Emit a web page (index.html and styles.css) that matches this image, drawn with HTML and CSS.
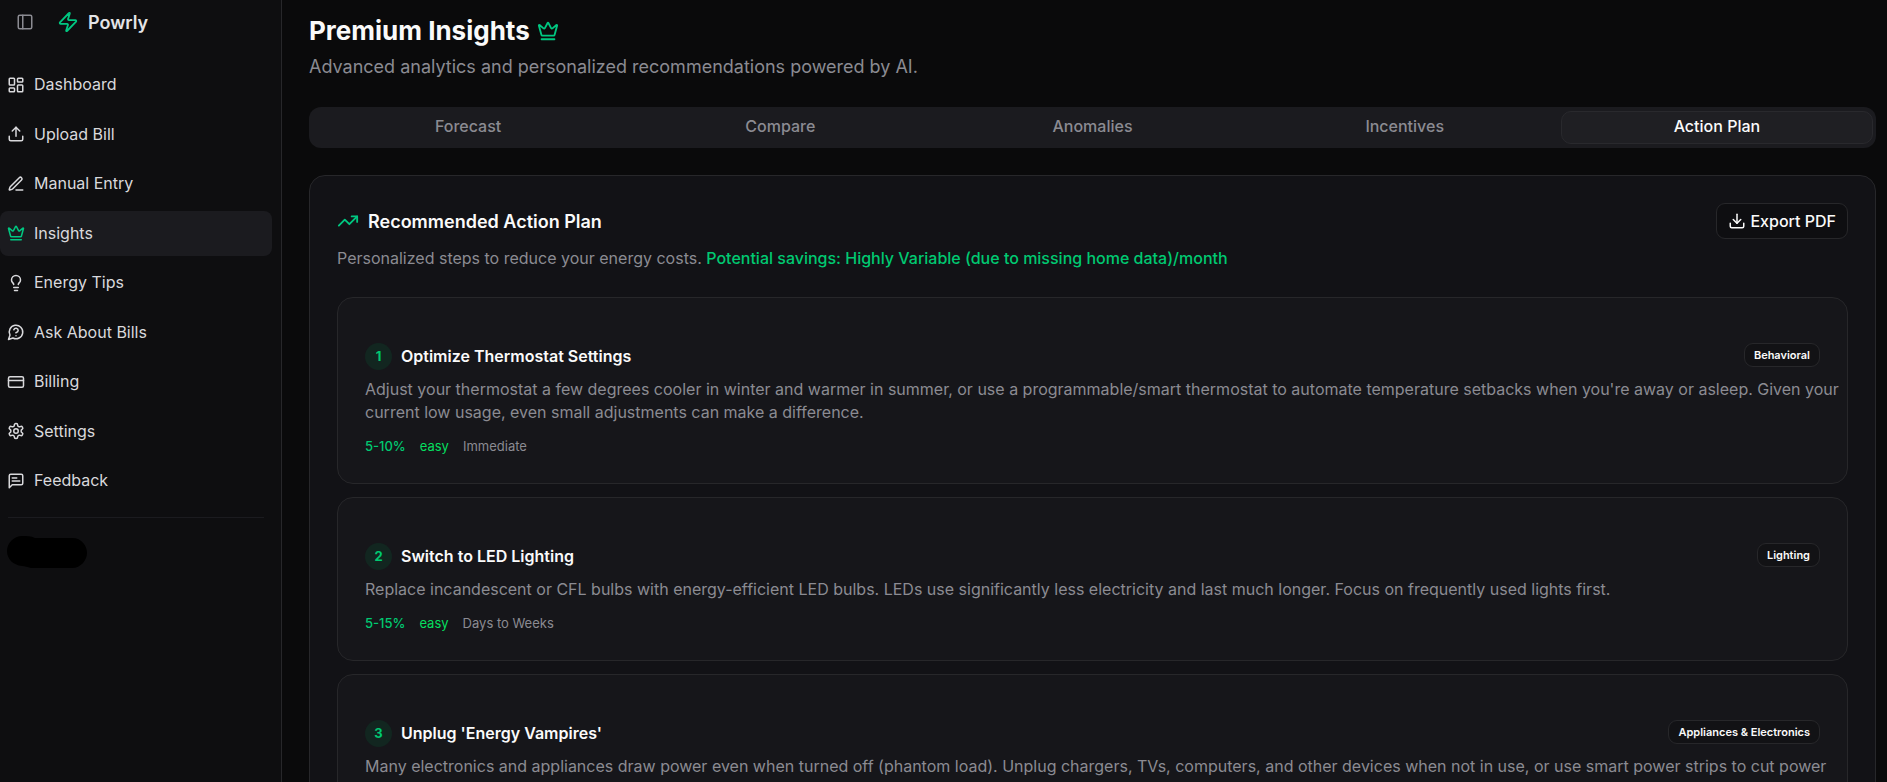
FILE: index.html
```html
<!DOCTYPE html>
<html lang="en">
    <head>
        <meta charset="utf-8">
        <title>Powrly - Premium Insights</title>
        <link rel="stylesheet" href="styles.css">
    </head>
    <body>
        <!-- icon set -->
        <svg class="sprite" aria-hidden="true">
            <symbol id="i-panel" viewBox="0 0 24 24"><rect x="3" y="3" width="18" height="18" rx="2"/><path d="M9 3v18"/></symbol>
            <symbol id="i-zap" viewBox="0 0 24 24"><path d="M4 14a1 1 0 0 1-.78-1.63l9.9-10.2a.5.5 0 0 1 .86.46l-1.92 6.02A1 1 0 0 0 13 10h7a1 1 0 0 1 .78 1.63l-9.9 10.2a.5.5 0 0 1-.86-.46l1.92-6.02A1 1 0 0 0 11 14z"/></symbol>
            <symbol id="i-dashboard" viewBox="0 0 24 24"><rect x="3" y="3" width="7" height="9" rx="1"/><rect x="14" y="3" width="7" height="5" rx="1"/><rect x="14" y="12" width="7" height="9" rx="1"/><rect x="3" y="16" width="7" height="5" rx="1"/></symbol>
            <symbol id="i-upload" viewBox="0 0 24 24"><path d="M12 3v12"/><path d="m17 8-5-5-5 5"/><path d="M21 15v4a2 2 0 0 1-2 2H5a2 2 0 0 1-2-2v-4"/></symbol>
            <symbol id="i-pen" viewBox="0 0 24 24"><path d="M12 20h9"/><path d="M16.376 3.622a1 1 0 0 1 3.002 3.002L7.368 18.635a2 2 0 0 1-.855.506l-2.872.838a.5.5 0 0 1-.62-.62l.838-2.872a2 2 0 0 1 .506-.854z"/></symbol>
            <symbol id="i-crown" viewBox="0 0 24 24"><path d="M11.562 3.266a.5.5 0 0 1 .876 0L15.39 8.87a1 1 0 0 0 1.516.294L21.183 5.5a.5.5 0 0 1 .798.519l-2.834 10.246a1 1 0 0 1-.956.734H5.81a1 1 0 0 1-.957-.734L2.02 6.02a.5.5 0 0 1 .798-.519l4.276 3.664a1 1 0 0 0 1.516-.294z"/><path d="M5 21h14"/></symbol>
            <symbol id="i-bulb" viewBox="0 0 24 24"><path d="M15 14c.2-1 .7-1.7 1.5-2.5 1-.9 1.5-2.2 1.5-3.5A6 6 0 0 0 6 8c0 1 .2 2.2 1.5 3.5.7.7 1.3 1.5 1.5 2.5"/><path d="M9 18h6"/><path d="M10 22h4"/></symbol>
            <symbol id="i-ask" viewBox="0 0 24 24"><path d="M7.9 20A9 9 0 1 0 4 16.1L2 22Z"/><path d="M9.09 9a3 3 0 0 1 5.83 1c0 2-3 3-3 3"/><path d="M12 17h.01"/></symbol>
            <symbol id="i-card" viewBox="0 0 24 24"><rect x="2" y="5" width="20" height="14" rx="2"/><path d="M2 10h20"/></symbol>
            <symbol id="i-settings" viewBox="0 0 24 24"><path d="M12.22 2h-.44a2 2 0 0 0-2 2v.18a2 2 0 0 1-1 1.73l-.43.25a2 2 0 0 1-2 0l-.15-.08a2 2 0 0 0-2.73.73l-.22.38a2 2 0 0 0 .73 2.73l.15.1a2 2 0 0 1 1 1.72v.51a2 2 0 0 1-1 1.74l-.15.09a2 2 0 0 0-.73 2.73l.22.38a2 2 0 0 0 2.73.73l.15-.08a2 2 0 0 1 2 0l.43.25a2 2 0 0 1 1 1.73V20a2 2 0 0 0 2 2h.44a2 2 0 0 0 2-2v-.18a2 2 0 0 1 1-1.73l.43-.25a2 2 0 0 1 2 0l.15.08a2 2 0 0 0 2.73-.73l.22-.39a2 2 0 0 0-.73-2.73l-.15-.08a2 2 0 0 1-1-1.74v-.5a2 2 0 0 1 1-1.74l.15-.09a2 2 0 0 0 .73-2.73l-.22-.38a2 2 0 0 0-2.73-.73l-.15.08a2 2 0 0 1-2 0l-.43-.25a2 2 0 0 1-1-1.73V4a2 2 0 0 0-2-2z"/><circle cx="12" cy="12" r="3"/></symbol>
            <symbol id="i-feedback" viewBox="0 0 24 24"><path d="M21 15a2 2 0 0 1-2 2H7l-4 4V5a2 2 0 0 1 2-2h14a2 2 0 0 1 2 2z"/><path d="M13 8H7"/><path d="M17 12H7"/></symbol>
            <symbol id="i-trend" viewBox="0 0 24 24"><path d="M16 7h6v6"/><path d="m22 7-8.5 8.5-5-5L2 17"/></symbol>
            <symbol id="i-download" viewBox="0 0 24 24"><path d="M12 15V3"/><path d="M21 15v4a2 2 0 0 1-2 2H5a2 2 0 0 1-2-2v-4"/><path d="m7 10 5 5 5-5"/></symbol>
        </svg>

        <div class="app">
            <aside class="sidebar">
                <div class="brand">
                    <button class="toggle" type="button" aria-label="Toggle sidebar"><svg class="icon"><use href="#i-panel"/></svg></button>
                    <svg class="icon icon-lg green"><use href="#i-zap"/></svg>
                    <span class="brand-name">Powrly</span>
                </div>
                <nav class="menu">
                    <a class="menu-item" href="#"><svg class="icon"><use href="#i-dashboard"/></svg><span>Dashboard</span></a>
                    <a class="menu-item" href="#"><svg class="icon"><use href="#i-upload"/></svg><span>Upload Bill</span></a>
                    <a class="menu-item" href="#"><svg class="icon"><use href="#i-pen"/></svg><span>Manual Entry</span></a>
                    <a class="menu-item active" href="#"><svg class="icon green"><use href="#i-crown"/></svg><span>Insights</span></a>
                    <a class="menu-item" href="#"><svg class="icon"><use href="#i-bulb"/></svg><span>Energy Tips</span></a>
                    <a class="menu-item" href="#"><svg class="icon"><use href="#i-ask"/></svg><span>Ask About Bills</span></a>
                    <a class="menu-item" href="#"><svg class="icon"><use href="#i-card"/></svg><span>Billing</span></a>
                    <a class="menu-item" href="#"><svg class="icon"><use href="#i-settings"/></svg><span>Settings</span></a>
                    <a class="menu-item" href="#"><svg class="icon"><use href="#i-feedback"/></svg><span>Feedback</span></a>
                </nav>
                <div class="account">
                    <svg class="account-mark" viewBox="1 0 80 32"><path d="M15 0C20 0 24 0 28 2H65C75 2 80 10 80 17S74 32 65 32H24C20 31 18 30 15 30C6 29 0 23 0 15S7 0 15 0Z"/></svg>
                </div>
            </aside>

            <main class="content">
                <header class="page-header">
                    <h1>Premium Insights <svg class="icon icon-lg green"><use href="#i-crown"/></svg></h1>
                    <p>Advanced analytics and personalized recommendations powered by AI.</p>
                </header>

                <div class="tabs" role="tablist">
                    <button class="tab" type="button" role="tab">Forecast</button>
                    <button class="tab" type="button" role="tab">Compare</button>
                    <button class="tab" type="button" role="tab">Anomalies</button>
                    <button class="tab" type="button" role="tab">Incentives</button>
                    <button class="tab selected" type="button" role="tab" aria-selected="true">Action Plan</button>
                </div>

                <section class="plan">
                    <div class="plan-header">
                        <h2><svg class="icon icon-lg green"><use href="#i-trend"/></svg>Recommended Action Plan</h2>
                        <button class="export" type="button"><svg class="icon"><use href="#i-download"/></svg>Export PDF</button>
                    </div>
                    <p class="plan-summary">Personalized steps to reduce your energy costs. <span class="savings">Potential savings: Highly Variable (due to missing home data)/month</span></p>

                    <div class="steps">
                        <article class="step">
                            <div class="step-header">
                                <span class="number">1</span>
                                <h3>Optimize Thermostat Settings</h3>
                                <span class="badge">Behavioral</span>
                            </div>
                            <p>Adjust your thermostat a few degrees cooler in winter and warmer in summer, or use a programmable/smart thermostat to automate temperature setbacks when you're away or asleep. Given your current low usage, even small adjustments can make a difference.</p>
                            <div class="meta">
                                <span class="saving">5-10%</span>
                                <span class="effort">easy</span>
                                <span>Immediate</span>
                            </div>
                        </article>
                        <article class="step">
                            <div class="step-header">
                                <span class="number">2</span>
                                <h3>Switch to LED Lighting</h3>
                                <span class="badge">Lighting</span>
                            </div>
                            <p>Replace incandescent or CFL bulbs with energy-efficient LED bulbs. LEDs use significantly less electricity and last much longer. Focus on frequently used lights first.</p>
                            <div class="meta">
                                <span class="saving">5-15%</span>
                                <span class="effort">easy</span>
                                <span>Days to Weeks</span>
                            </div>
                        </article>
                        <article class="step">
                            <div class="step-header">
                                <span class="number">3</span>
                                <h3>Unplug 'Energy Vampires'</h3>
                                <span class="badge">Appliances &amp; Electronics</span>
                            </div>
                            <p>Many electronics and appliances draw power even when turned off (phantom load). Unplug chargers, TVs, computers, and other devices when not in use, or use smart power strips to cut power</p>
                        </article>
                    </div>
                </section>
            </main>
        </div>
    </body>
</html>
```

FILE: styles.css
```css
* {
    box-sizing: border-box;
}
body {
    margin: 0;
    background: #0a0a0b;
    color: #fafafa;
    font-family: Inter, "Liberation Sans", sans-serif;
    font-size: 16px;
    line-height: 23px;
}
h1, h2, h3, p {
    margin: 0;
}
button {
    font: inherit;
    color: inherit;
    background: none;
    border: none;
    padding: 0;
}
.sprite {
    display: none;
}
.icon {
    width: 18px;
    height: 18px;
    flex: none;
    fill: none;
    stroke: currentColor;
    stroke-width: 2;
    stroke-linecap: round;
    stroke-linejoin: round;
}
.icon-lg {
    width: 22px;
    height: 22px;
}
.green {
    color: #00c781;
}

.app {
    display: flex;
    height: 100vh;
    overflow: hidden;
}

/* sidebar */
.sidebar {
    flex: none;
    width: 282px;
    background: #0e0e10;
    border-right: 1px solid #27272a;
}
.brand {
    display: flex;
    align-items: center;
    height: 44px;
    padding-left: 16px;
}
.toggle {
    display: flex;
    margin-right: 23px;
    color: #8b8b92;
}
.brand-name {
    margin-left: 9px;
    font-size: 18px;
    font-weight: 600;
    color: #e4e4e7;
}
.menu {
    display: flex;
    flex-direction: column;
    justify-content: space-between;
    height: 441px;
    margin-top: 18px;
    margin-right: 9px;
}
.menu-item {
    display: flex;
    align-items: center;
    gap: 9px;
    height: 45px;
    padding: 0 7px;
    border-radius: 8px;
    color: #d9d9dc;
    text-decoration: none;
}
.menu-item.active {
    background: #1b1b1f;
}
.account {
    margin: 14px 17px 0 8px;
    padding-top: 18px;
    border-top: 1px solid #1b1b1f;
}
.account-mark {
    display: block;
    width: 80px;
    height: 32px;
    overflow: visible;
}

/* page */
.content {
    flex: 1;
    min-width: 0;
    padding: 13px 11px 0 27px;
}
.page-header h1 {
    display: flex;
    align-items: center;
    gap: 7px;
    font-size: 26px;
    line-height: 35px;
    font-weight: 700;
}
.page-header p {
    margin-top: 6px;
    font-size: 18px;
    line-height: 26px;
    color: #8b8b92;
}
.tabs {
    display: grid;
    grid-template-columns: repeat(5, 1fr);
    margin-top: 27px;
    padding: 4px 3px;
    height: 41px;
    background: #1b1b1f;
    border-radius: 12px;
}
.tab {
    padding-bottom: 2px;
    border: 1px solid transparent;
    border-radius: 10px;
    color: #8b8b92;
    font-weight: 500;
}
.tab.selected {
    background: #1f1f23;
    border-color: #29292d;
    color: #fafafa;
}

/* action plan */
.plan {
    margin-top: 27px;
    padding: 27px;
    border: 1px solid #27272a;
    border-radius: 16px;
    background: #121216;
}
.plan-header {
    display: flex;
    align-items: center;
    justify-content: space-between;
}
.plan-header h2 {
    display: flex;
    align-items: center;
    gap: 9px;
    font-size: 18px;
    font-weight: 600;
}
.export {
    display: flex;
    align-items: center;
    gap: 4px;
    height: 36px;
    padding: 0 11px;
    border: 1px solid #27272a;
    border-radius: 9px;
    background: #0e0e11;
    font-weight: 500;
}
.plan-summary {
    margin-top: 8px;
    color: #8b8b92;
}
.savings {
    color: #00c971;
    font-weight: 500;
}
.steps {
    display: flex;
    flex-direction: column;
    gap: 13px;
    margin-top: 27px;
}
.step {
    padding: 45px 3px 28px 27px;
    border: 1px solid #27272a;
    border-radius: 16px;
    background: #16161a;
}
.step-header {
    display: flex;
    align-items: center;
    gap: 9px;
    height: 27px;
    margin-right: 24px;
}
.number {
    width: 27px;
    height: 27px;
    border-radius: 50%;
    background: #122620;
    color: #00c971;
    font-size: 13px;
    line-height: 27px;
    font-weight: 700;
    text-align: center;
}
.step h3 {
    flex: 1;
    font-size: 16px;
    font-weight: 600;
}
.step p {
    margin-top: 8px;
    color: #8b8b92;
}
.badge {
    align-self: flex-start;
    padding: 0 9px;
    border: 1px solid #27272a;
    border-radius: 9px;
    background: #121215;
    font-size: 11px;
    line-height: 22px;
    font-weight: 600;
}
.meta {
    display: flex;
    gap: 14px;
    margin-top: 13px;
    font-size: 13px;
    line-height: 18px;
    color: #8b8b92;
}
.saving {
    color: #00c971;
    font-weight: 500;
}
.effort {
    color: #05df5f;
}
```
